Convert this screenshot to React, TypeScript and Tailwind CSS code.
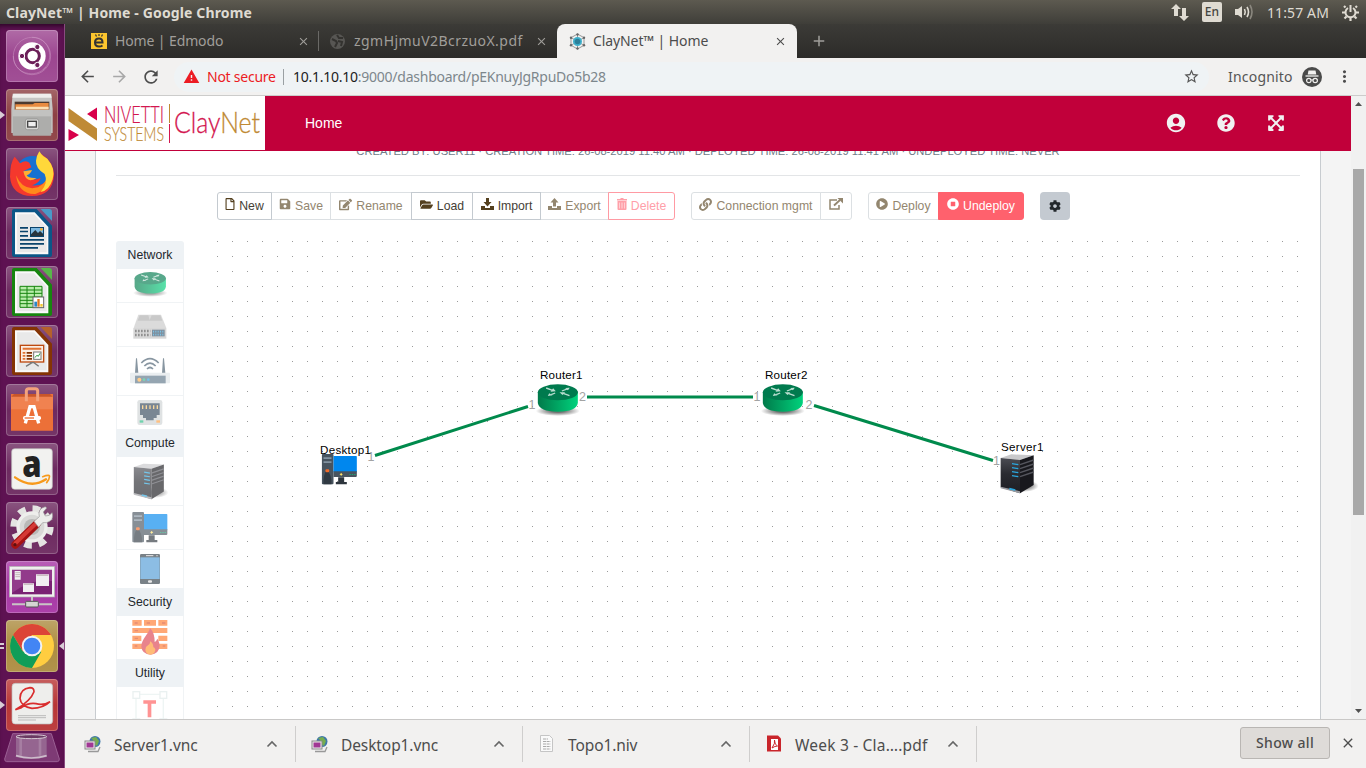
import React from "react";
import {
  FaCog,
  FaEdit,
  FaExpandArrowsAlt,
  FaFolderOpen,
  FaLink,
  FaPlayCircle,
  FaQuestionCircle,
  FaRegFile,
  FaSave,
  FaStopCircle,
} from "react-icons/fa";
import { MdAccountCircle, MdArrowBack, MdArrowForward, MdRefresh, MdStarBorder, MdWarning, MdMoreVert, MdClose, MdAdd } from "react-icons/md";

const UI = "font-['Noto_Sans','Open_Sans',sans-serif]";

/* ---------- Desktop launcher ---------- */

function Doc({ edge, corner, children }: { edge: string; corner: string; children: React.ReactNode }) {
  return (
    <>
      <path d="M20 6H92L138 56V144Q138 150 132 150H24Q18 150 18 144V12Q18 6 24 6Z" fill={edge} />
      <path d="M27 16H86L127 60V142H27Z" fill="#fafafa" />
      <path d="M33 22H84L122 62V136H33Z" fill="#e9e9e9" />
      <path d="M104 6H130Q138 6 138 14V42Z" fill={corner} />
      {children}
    </>
  );
}

const launcher: { tile: string; icon: React.ReactNode; mark?: "left" | "both" }[] = [
  {
    tile: "bg-[#9c4690]",
    icon: (
      <>
        <circle cx="78" cy="78" r="56" fill="none" stroke="#c68bbd" strokeWidth="3" opacity=".6" />
        <path d="M78 22C130 20 150 90 110 120M22 78C20 130 90 150 120 110" fill="none" stroke="#d3a4cc" strokeWidth="2" opacity=".6" />
        <circle cx="78" cy="78" r="41" fill="#fff" />
        <circle cx="80" cy="78" r="20" fill="none" stroke="#6b1f58" strokeWidth="9" />
        <g fill="#6b1f58" stroke="#fff" strokeWidth="3">
          <circle cx="48" cy="78" r="8" />
          <circle cx="94" cy="51" r="8" />
          <circle cx="94" cy="105" r="8" />
        </g>
      </>
    ),
  },
  {
    tile: "bg-[#8d4043]",
    mark: "left",
    icon: (
      <>
        <path d="M20 14H136L140 60V132H16V60Z" fill="#c6c6c4" />
        <path d="M22 14H134L137 26H19Z" fill="#efefed" />
        <rect x="26" y="38" width="104" height="32" fill="#4c3a30" />
        <path d="M28 46H80L86 42H128V68H28Z" fill="#e88b40" />
        <path d="M30 53H128V60H30Z" fill="#fbe0b5" />
        <rect x="20" y="62" width="116" height="78" rx="3" fill="#adadab" />
        <rect x="20" y="62" width="116" height="20" fill="#c2c2c0" />
        <rect x="58" y="90" width="40" height="32" rx="6" fill="#d9d9d7" stroke="#8a8a88" strokeWidth="2" />
        <rect x="65" y="97" width="26" height="17" fill="#eee" stroke="#444" strokeWidth="4" />
      </>
    ),
  },
  {
    tile: "bg-[#6d2a60]",
    icon: (
      <>
        <circle cx="80" cy="76" r="52" fill="#1671d2" />
        <path d="M26 26L42 46Q60 34 70 44L76 58L52 70Q62 96 92 94L104 90Q100 106 78 112Q120 116 132 80Q140 44 100 14Q144 40 144 84Q138 144 78 144Q16 142 12 86Q12 44 26 26Z" fill="#f5382d" />
        <path d="M30 82Q50 130 96 118Q128 104 128 64Q142 120 88 138Q38 140 30 82Z" fill="#ff8a1c" />
        <path d="M100 10Q110 26 124 32Q150 62 140 94Q130 128 104 132Q128 104 116 78Q88 60 90 38Q92 22 100 10Z" fill="#ffd83a" />
        <path d="M52 70L78 66Q74 78 62 82Q68 92 92 90Q60 110 52 70Z" fill="#ffad32" />
      </>
    ),
  },
  {
    tile: "bg-[#6d2a60]",
    icon: (
      <Doc edge="#0b5687" corner="#4a9ac8">
        <g fill="#0a446c">
          <path d="M42 60H66V65H42ZM42 71H66V76H42ZM42 84H66V89H42ZM42 96H114V101H42ZM42 108H114V113H42ZM42 120H96V125H42Z" />
          <rect x="72" y="60" width="42" height="30" />
        </g>
        <rect x="75" y="63" width="36" height="24" fill="#7db9e0" />
        <path d="M75 82L88 69L96 78L102 72L111 80V87H75Z" fill="#28353d" />
        <circle cx="106" cy="67" r="4" fill="#f2ad2e" />
      </Doc>
    ),
  },
  {
    tile: "bg-[#6d2a60]",
    icon: (
      <Doc edge="#17850f" corner="#58b64a">
        <rect x="42" y="60" width="66" height="64" fill="#b8edaa" />
        <path d="M42 61H108V124H42ZM42 72H108M42 82H108M42 93H108M42 103H108M42 113H108M63 61V124M85 61V124" fill="none" stroke="#17850f" strokeWidth="3" />
        <rect x="81" y="93" width="32" height="32" fill="#fff" stroke="#666" strokeWidth="3" />
        <path d="M85 107H93V122H85Z" fill="#2c87c8" />
        <path d="M94 99H101V122H94Z" fill="#e07620" />
        <path d="M103 114H110V122H103Z" fill="#f3c72e" />
      </Doc>
    ),
  },
  {
    tile: "bg-[#6d2a60]",
    icon: (
      <Doc edge="#843404" corner="#b4612b">
        <rect x="43" y="61" width="70" height="50" fill="#fbeee4" stroke="#bd4a10" strokeWidth="4" />
        <path d="M50 68H106V74H50ZM50 81H58V86H50ZM50 90H58V95H50ZM50 99H58V104H50Z" fill="#e07333" />
        <path d="M62 81H78V86H62ZM62 90H78V95H62ZM62 99H78V104H62Z" fill="#843404" />
        <rect x="83" y="81" width="22" height="22" fill="#fff" stroke="#777" strokeWidth="3" />
        <path d="M86 98L93 91L97 94L102 85" fill="none" stroke="#2d9b3c" strokeWidth="3" />
        <path d="M72 113H84L98 124M78 113L60 124" fill="none" stroke="#777" strokeWidth="4" />
      </Doc>
    ),
  },
  {
    tile: "bg-[#6d2a60]",
    icon: (
      <>
        <path d="M15 30H141V140H15Z" fill="#ec7038" />
        <path d="M15 40L24 30H132L141 40Z" fill="#c9562a" />
        <path d="M15 38H141V76H15Z" fill="#f08250" />
        <path d="M61 52V20Q62 14 68 14H88Q94 14 95 20V52" fill="none" stroke="#f3a27c" strokeWidth="9" />
        <path d="M58 118L72 68H84L98 118" fill="none" stroke="#fff" strokeWidth="10" />
        <rect x="51" y="96" width="54" height="12" rx="5" fill="#fff" />
        <path d="M56 100H84V104H56Z" fill="#ec7038" />
      </>
    ),
  },
  {
    tile: "bg-[#6d2a60]",
    icon: (
      <>
        <rect x="17" y="17" width="122" height="122" rx="9" fill="#f2f2f0" stroke="#bbb" strokeWidth="2" />
        <text x="78" y="101" textAnchor="middle" fontFamily="Open Sans" fontWeight="800" fontSize="112" fill="#222" textLength="58" lengthAdjust="spacingAndGlyphs">
          a
        </text>
        <path d="M27 103Q76 138 120 109" fill="none" stroke="#f79a1c" strokeWidth="7" strokeLinecap="round" />
        <path d="M110 101Q134 92 130 103Q130 110 122 119" fill="none" stroke="#f79a1c" strokeWidth="5" strokeLinecap="round" />
      </>
    ),
  },
  {
    tile: "bg-[#6d2a60]",
    icon: (
      <>
        <circle cx="78" cy="75" r="54" fill="none" stroke="#e4e4e2" strokeWidth="22" strokeDasharray="22 20.4" />
        <circle cx="78" cy="75" r="42" fill="#d9d9d7" stroke="#eeeeec" strokeWidth="10" />
        <circle cx="78" cy="75" r="24" fill="#b9b9b7" />
        <path d="M28 128L92 66" stroke="#a51313" strokeWidth="24" strokeLinecap="round" />
        <path d="M28 124L90 64" stroke="#d53a36" strokeWidth="12" strokeLinecap="round" />
        <circle cx="27" cy="128" r="5" fill="#5e1010" />
        <path d="M84 58L100 44Q94 20 118 14L122 18L112 30L118 42L130 40L138 32Q146 54 122 62L110 62L98 76Z" fill="#ededeb" stroke="#999" strokeWidth="2" />
      </>
    ),
  },
  {
    tile: "bg-[#a737a5]",
    icon: (
      <>
        <rect x="10" y="16" width="136" height="92" fill="#f0f0ee" stroke="#aaa" strokeWidth="2" />
        <rect x="18" y="24" width="120" height="76" fill="#7a2273" />
        <path d="M18 24H138V60Q80 50 18 96Z" fill="#923a8b" />
        <path d="M18 25H138" stroke="#ddd" strokeWidth="3" />
        <path d="M26 30H44V56H26ZM90 40H129V75H90ZM51 67H84V93H51Z" fill="#f1eef1" />
        <path d="M28 35H42M28 41H42M28 47H42M92 43H127M53 70H82" stroke="#a99" strokeWidth="2" />
        <path d="M78 108V122M18 130H138" stroke="#c9c5c5" strokeWidth="6" />
        <rect x="59" y="121" width="38" height="17" rx="3" fill="#d4d4d2" stroke="#555" strokeWidth="3" />
      </>
    ),
  },
  {
    tile: "bg-[#ad8d42]",
    mark: "both",
    icon: (
      <>
        <circle cx="78" cy="78" r="66" fill="#ffcd40" />
        <path d="M78 45H135A66 66 0 0 0 21 45L50 94Z" fill="#dc4437" />
        <path d="M21 45A66 66 0 0 0 78 144L106 95L50 94Z" fill="#109d58" />
        <circle cx="78" cy="78" r="31" fill="#f2f2f2" />
        <circle cx="78" cy="78" r="25" fill="#4285f4" />
      </>
    ),
  },
  {
    tile: "bg-[#b83636]",
    mark: "left",
    icon: (
      <>
        <rect x="18" y="13" width="122" height="122" rx="10" fill="#eeeeec" stroke="#bbb" strokeWidth="2" />
        <path d="M28 92Q74 66 84 38Q84 26 72 26Q42 30 42 58Q44 82 78 88Q112 88 132 68Q112 80 90 74Q68 70 46 86Z" fill="none" stroke="#d92d2d" strokeWidth="5" />
        <path d="M36 110H120M36 116H120M36 123H90" stroke="#bbb" strokeWidth="3" />
      </>
    ),
  },
];

function Launcher() {
  return (
    <aside className="flex w-[65px] shrink-0 flex-col gap-[7px] overflow-hidden border-r border-[#8a4a80] bg-[#5e1252] pt-[6px] shadow-[inset_0_5px_5px_-3px_#2a0524]">
      {launcher.map((l, i) => (
        <div key={i} className="flex h-[52px] shrink-0 items-center">
          <span className="flex w-[6px] flex-col justify-center gap-[2px]">
            {l.mark === "left" && (
              <svg width="5" height="8" viewBox="0 0 5 8">
                <path d="M0 0L5 4L0 8Z" fill="#d8cdd6" />
              </svg>
            )}
            {l.mark === "both" && (
              <>
                <i className="h-[2px] w-[4px] bg-[#d8cdd6]" />
                <i className="h-[2px] w-[4px] bg-[#d8cdd6]" />
              </>
            )}
          </span>
          <div className={`h-[52px] w-[52px] rounded-[4px] shadow-[inset_0_0_0_1px_rgba(255,255,255,0.22)] ${l.tile}`}>
            <div className="h-full w-full rounded-[4px] bg-linear-to-b from-white/20 via-transparent to-white/5">
              <svg width="52" height="52" viewBox="0 0 156 156">
                {l.icon}
              </svg>
            </div>
          </div>
          {l.mark === "both" && (
            <svg className="ml-px" width="5" height="8" viewBox="0 0 5 8">
              <path d="M5 0L0 4L5 8Z" fill="#d8cdd6" />
            </svg>
          )}
        </div>
      ))}
      <svg className="-mt-[5px] ml-[4px] shrink-0" width="56" height="30" viewBox="0 0 168 90">
        <path d="M26 2H142L166 78Q166 86 160 86H8Q2 86 2 78Z" fill="#7e3a75" stroke="#9b6094" strokeWidth="3" />
        <path d="M36 12V72Q82 84 128 72V12Z" fill="#a27c9e" opacity=".65" />
        <path d="M50 16V68M108 16V68" stroke="#c7aec4" strokeWidth="8" opacity=".35" />
        <ellipse cx="82" cy="11" rx="46" ry="6" fill="#6a3a63" stroke="#d6cad4" strokeWidth="3" />
        <path d="M36 68Q82 82 128 68" fill="none" stroke="#cdbccb" strokeWidth="5" />
      </svg>
    </aside>
  );
}

/* ---------- Window chrome ---------- */

function TopPanel() {
  return (
    <div className={`flex h-[24px] shrink-0 items-center justify-between bg-linear-to-b from-[#5d5a50] to-[#3f3e39] pl-[6px] pr-[7px] text-[#dfdbd2] ${UI}`}>
      <span className="pt-px text-[14px] font-bold leading-none tracking-[0.13px]">ClayNet™ | Home - Google Chrome</span>
      <div className="flex items-center">
        <svg width="18" height="17" viewBox="0 0 18 17" fill="#dfdbd2">
          <path d="M5 0L10 5H7V12H3V5H0ZM13 17L8 12H11V4H15V12H18Z" />
        </svg>
        <span className="ml-[13px] flex h-[20px] w-[20px] items-center justify-center rounded-[2px] bg-[#dfdbd2] text-[12px] font-medium leading-none text-[#454440]">En</span>
        <svg className="ml-[12px]" width="20" height="16" viewBox="0 0 20 16">
          <path d="M1 5H4L8 2V14L4 11H1Z" fill="#dfdbd2" />
          <path d="M10.500 5Q12 8 10.500 11M13 3Q16 8 13 13" fill="none" stroke="#dfdbd2" strokeWidth="1.600" />
          <path d="M16 1Q20 8 16 15" fill="none" stroke="#8a877e" strokeWidth="1.600" />
        </svg>
        <span className="ml-[13px] pt-px text-[14px] leading-none tracking-[0.13px]">11:57 AM</span>
        <svg className="ml-[13px]" width="17" height="17" viewBox="0 0 17 17" fill="none" stroke="#dfdbd2">
          <path d="M6 4A5 5 0 1 0 11 4" strokeWidth="2" />
          <path d="M8.500 1V8" strokeWidth="2" />
          <path d="M3.500 3.500L2 2M13.500 3.500L15 2M3 8.500H0M17 8.500H14M4.500 12.500L2.500 14.500M12.500 12.500L14.500 14.500M8.500 14V17" strokeWidth="2.200" />
        </svg>
      </div>
    </div>
  );
}

function Tabs() {
  return (
    <div className={`flex h-[34px] shrink-0 bg-linear-to-b from-[#3c3b37] to-[#2c2b29] text-[14px] leading-none text-[#a09e9a] ${UI}`}>
      <div className="flex w-[253px] items-center pl-[26px] pr-[8px]">
        <svg width="16" height="16" viewBox="0 0 16 16">
          <rect width="16" height="16" fill="#fcc52e" />
          <path d="M4 9.500H11.500Q11.500 5.500 8 5.500Q4 5.500 4 9.500Q4 13.500 8 13.500Q10 13.500 11.500 12.500" fill="none" stroke="#333" strokeWidth="2" />
          <path d="M4.500 1.500L5.500 3.500M8 1V3M11.500 1.500L10.500 3.500" stroke="#333" strokeWidth="1.200" />
        </svg>
        <span className="ml-[8px] grow whitespace-nowrap tracking-[-0.12px]">Home | Edmodo</span>
        <MdClose size={13} />
      </div>
      <div className="my-[7px] w-px bg-[#6a6966]" />
      <div className="flex w-[238px] items-center pl-[11px] pr-[9px]">
        <svg width="15" height="15" viewBox="0 0 15 15">
          <circle cx="7.500" cy="7.500" r="7.500" fill="#575653" />
          <path d="M2 5L6 7L7 9L5 13M7 1L9 4L13 4M8 7L12 8L11 12" fill="none" stroke="#33322f" strokeWidth="2" />
        </svg>
        <span className="ml-[9px] grow whitespace-nowrap tracking-[0.45px]">zgmHjmuV2BcrzuoX.pdf</span>
        <MdClose size={13} />
      </div>
      <div className="flex w-[240px] items-center rounded-t-[8px] bg-[#f2f1f0] pl-[12px] pr-[10px] text-[#4c4c4c]">
        <svg width="17" height="17" viewBox="0 0 17 17">
          <path d="M8.500 1L15 4.700V12.300L8.500 16L2 12.300V4.700ZM8.500 1V16M2 4.700L15 12.300M15 4.700L2 12.300" fill="none" stroke="#999" strokeWidth="1" />
          <g fill="#666">
            <circle cx="8.500" cy="1.500" r="1.200" />
            <circle cx="15" cy="4.700" r="1.200" />
            <circle cx="15" cy="12.300" r="1.200" />
            <circle cx="8.500" cy="15.500" r="1.200" />
            <circle cx="2" cy="12.300" r="1.200" />
            <circle cx="2" cy="4.700" r="1.200" />
          </g>
          <circle cx="8.500" cy="8.500" r="4.500" fill="#3eb0cc" />
          <circle cx="8.500" cy="8.500" r="2.800" fill="#2a7f99" />
        </svg>
        <span className="ml-[7px] grow whitespace-nowrap tracking-[-0.1px]">ClayNet™ | Home</span>
        <MdClose size={13} />
      </div>
      <div className="flex items-center pl-[13px]">
        <MdAdd size={18} />
      </div>
    </div>
  );
}

function AddressBar() {
  return (
    <div className={`flex h-[38px] shrink-0 items-center border-b border-[#cccccb] bg-[#f2f1f0] pl-[13px] pr-[12px] text-[14px] leading-none ${UI}`}>
      <MdArrowBack size={19} className="text-[#4d4d4d]" />
      <MdArrowForward size={19} className="ml-[13px] text-[#a8a8a8]" />
      <MdRefresh size={20} className="ml-[12px] text-[#4d4d4d]" />
      <div className="ml-[13px] flex h-[30px] w-[1035px] items-center rounded-full bg-[#eff3f5] pl-[9px] pr-[9px]">
        <MdWarning size={17} className="text-[#ec1c24]" />
        <span className="ml-[7px] w-[69px] whitespace-nowrap tracking-[-0.25px] text-[#ec1c24]">Not secure</span>
        <span className="ml-[7px] h-[16px] w-px bg-[#9aa0a3]" />
        <span className="ml-[9px] grow whitespace-nowrap tracking-[-0.25px] text-[#7d878c]">
          <span className="text-[#1c1c1c]">10.1.10.10</span>:9000/dashboard/pEKnuyJgRpuDo5b28
        </span>
        <MdStarBorder size={17} className="text-[#555]" />
      </div>
      <span className="ml-[19px] whitespace-nowrap tracking-[0.2px] text-[#555]">Incognito</span>
      <svg className="ml-auto" width="20" height="20" viewBox="0 0 20 20">
        <circle cx="10" cy="10" r="10" fill="#4a4a4a" />
        <path d="M6.500 3.500H13.500L14.300 7.500H5.700Z" fill="#f2f1f0" />
        <path d="M3.500 9H16.500" stroke="#f2f1f0" strokeWidth="1.300" />
        <circle cx="6.800" cy="13.500" r="2.200" fill="none" stroke="#f2f1f0" strokeWidth="1.200" />
        <circle cx="13.200" cy="13.500" r="2.200" fill="none" stroke="#f2f1f0" strokeWidth="1.200" />
        <path d="M9 13H11" stroke="#f2f1f0" />
      </svg>
      <MdMoreVert size={19} className="ml-[13px] text-[#4d4d4d]" />
    </div>
  );
}

/* ---------- Page header ---------- */

function Header() {
  return (
    <header className="z-10 flex h-[55px] shrink-0 items-stretch border-b border-[#c1003a] bg-[#c1003a] text-[14px] text-white">
      <svg className="w-[200px] bg-white" height="54" viewBox="0 0 200 54">
        <path d="M3.500 12L32 32.500V45L3.500 25Z" fill="#bf8a35" />
        <path d="M32 11.500V24.500L22 18ZM3.500 33V45L14 39Z" fill="#d8004a" />
        <g fontFamily="Lato" fontWeight="300">
          <text x="39" y="26.500" fontSize="22.500" textLength="60" lengthAdjust="spacingAndGlyphs" fill="#d3164f" stroke="#d3164f" strokeWidth=".2">NIVETTI</text>
          <text x="39" y="45" fontSize="19" textLength="60" lengthAdjust="spacingAndGlyphs" fill="#bf8a35" stroke="#bf8a35" strokeWidth=".2">SYSTEMS</text>
          <text x="109" y="36.500" fontSize="28.500" textLength="86" lengthAdjust="spacingAndGlyphs" fill="#d3164f" stroke="#d3164f" strokeWidth=".3">
            Clay<tspan fill="#bf8a35" stroke="#bf8a35">Net</tspan>
          </text>
        </g>
        <path d="M104.500 8V27" stroke="#bf8a35" />
        <path d="M104.500 28V47" stroke="#d3164f" />
      </svg>
      <nav className="flex grow items-center pl-[40px]">Home</nav>
      <div className="flex items-center gap-[30px] pr-[66px] text-[#f1f1f1]">
        <MdAccountCircle size={22} />
        <FaQuestionCircle size={18} />
        <FaExpandArrowsAlt size={18} className="ml-[2px]" />
      </div>
    </header>
  );
}

/* ---------- Toolbar ---------- */

function Tray({ up }: { up?: boolean }) {
  return (
    <svg width="13" height="12" viewBox="0 0 13 12" fill="currentColor">
      {up ? <path d="M6.500 0L10.500 4.500H8V8.500H5V4.500H2.500Z" /> : <path d="M5 0H8V4H10.500L6.500 8.500L2.500 4H5Z" />}
      <path d="M0 8H4V10H9V8H13V12H0Z" />
    </svg>
  );
}

function TrashCan() {
  return (
    <svg width="10" height="12" viewBox="0 0 10 12" fill="currentColor">
      <path d="M0 1H3.500V0H6.500V1H10V2.500H0Z" />
      <path fillRule="evenodd" d="M.5 3H9.500V11Q9.500 12 8.500 12H1.500Q.5 12 .5 11ZM2.500 4.500V10.500H3V4.500ZM4.700 4.500V10.500H5.300V4.500ZM7 4.500V10.500H7.500V4.500Z" />
    </svg>
  );
}

function ExternalBox() {
  return (
    <svg width="14" height="12" viewBox="0 0 14 12" fill="none" stroke="currentColor">
      <path d="M8 2H1V11H10V7" strokeWidth="1.500" />
      <path d="M5 7.500L11 2" strokeWidth="1.800" />
      <path d="M8.500 0H14V5.500Z" fill="currentColor" stroke="none" />
    </svg>
  );
}

function Button({ w, icon, label, tone = "on", first, last }: { w: string; icon: React.ReactNode; label?: string; tone?: "on" | "off" | "danger" | "solid"; first?: boolean; last?: boolean }) {
  const tones = {
    on: "border-[#c4cad0] text-[#54401f] z-[1] [&>span]:text-[#454036]",
    off: "border-[#dce0e3] text-[#93866f]",
    danger: "border-[#ff9aa3] text-[#ffa0a9] z-[1]",
    solid: "border-[#ff616d] bg-[#ff616d] text-white z-[1]",
  };
  return (
    <button
      className={`relative flex h-[28px] items-start justify-center gap-[4px] border pt-[5px] text-[12.25px] leading-[17px] whitespace-nowrap ${w} ${tones[tone]} ${first ? "rounded-l-[3px]" : "-ml-px"} ${last ? "rounded-r-[3px]" : ""}`}
    >
      <i className="flex">{icon}</i>
      {label && <span>{label}</span>}
    </button>
  );
}

function Toolbar() {
  return (
    <div className="flex h-[28px] pl-[101px]">
      <div className="flex">
        <Button first w="w-[55px]" icon={<FaRegFile size={12} className="w-[10px]" />} label="New" />
        <Button w="w-[60px]" tone="off" icon={<FaSave size={12} />} label="Save" />
        <Button w="w-[82px]" tone="off" icon={<FaEdit size={13} />} label="Rename" />
        <Button w="w-[62px]" icon={<FaFolderOpen size={13} />} label="Load" />
        <Button w="w-[69px]" icon={<Tray />} label="Import" />
        <Button w="w-[69px]" tone="off" icon={<Tray up />} label="Export" />
        <Button last w="w-[67px]" tone="danger" icon={<TrashCan />} label="Delete" />
      </div>
      <div className="ml-[16px] flex">
        <Button first w="w-[130px]" tone="off" icon={<FaLink size={13} />} label="Connection mgmt" />
        <Button last w="w-[32px]" tone="off" icon={<ExternalBox />} />
      </div>
      <div className="ml-[16px] flex">
        <Button first w="w-[71px]" tone="off" icon={<FaPlayCircle size={12} />} label="Deploy" />
        <Button last w="w-[86px]" tone="solid" icon={<FaStopCircle size={12} />} label="Undeploy" />
      </div>
      <button className="ml-[16px] flex w-[30px] items-center justify-center rounded-[4px] bg-[#c4cad1] text-[#23282c]">
        <FaCog size={12} />
      </button>
    </div>
  );
}

/* ---------- Device drawings ---------- */

function Router() {
  return (
    <g>
      <ellipse cx="62" cy="82" rx="66" ry="15" fill="url(#shadow)" />
      <path d="M2 26V58Q6 84 62 84Q118 84 122 58V26Z" fill="url(#routerSide)" />
      <ellipse cx="62" cy="26" rx="60" ry="24" fill="#007a4e" />
      <path d="M27 13L46 20M95 14L74 22M54 28L42 33M97 36L78 29" stroke="#b9ddd0" strokeWidth="4" />
      <path d="M56 23L40 24L48 14ZM98 12L92 20L84 13ZM32 37L36 29L46 35ZM67 26L84 26L76 34Z" fill="#b9ddd0" />
    </g>
  );
}

function Desktop() {
  return (
    <g>
      <rect x="1" y="0" width="35" height="91" rx="3" fill="#48545f" />
      <path d="M6 10H30V15H6ZM6 22H30V27H6Z" fill="#8292a0" />
      <path d="M6 91Q4 64 16 48Q32 64 30 91Z" fill="#303942" />
      <rect x="12" y="46" width="11" height="9" rx="3" fill="#f26b2a" />
      <path d="M36 6H104Q106 6 106 8V55H36Z" fill="#0087ee" />
      <path d="M36 52H106V66Q106 69 103 69H36Z" fill="#48545f" />
      <path d="M50 70H68V84H76V91H43V84H50Z" fill="#2d353d" />
      <path d="M59 56L61 59L64 61L61 63L59 66L57 63L54 61L57 59Z" fill="#ffe36a" />
      <path d="M84 60H88V63H84ZM91 60H95V63H91ZM98 60H102V63H98Z" fill="#18a978" />
    </g>
  );
}

function Server() {
  return (
    <g>
      <ellipse cx="72" cy="96" rx="44" ry="18" fill="url(#shadow)" />
      <path d="M2 12L34 1L101 4L60 18Z" fill="#c9c9cb" />
      <path d="M2 12L60 18V118L2 100Z" fill="url(#serverFront)" />
      <path d="M60 18L101 4V93L60 118Z" fill="#18181d" />
      <path d="M60 32L101 18M60 44L101 30M60 56L101 42M60 68L101 54" stroke="#55565e" strokeWidth="4" />
      <path d="M36 29L55 32M36 41L55 44M36 53L55 56M36 65L55 68" stroke="#2aa8e0" strokeWidth="4" />
      <path d="M2 98L60 112V118L2 103Z" fill="#9a9ba0" />
      <path d="M28 104L46 108" stroke="#2aa8e0" strokeWidth="5" />
    </g>
  );
}

function Defs() {
  return (
    <defs>
      <linearGradient id="routerSide">
        <stop offset="0" stopColor="#007a4a" />
        <stop offset="1" stopColor="#00d27c" />
      </linearGradient>
      <linearGradient id="serverFront" x2="0" y2="1">
        <stop offset="0" stopColor="#4b4c53" />
        <stop offset="0.45" stopColor="#2a2b31" />
        <stop offset="1" stopColor="#1d1e24" />
      </linearGradient>
      <radialGradient id="shadow">
        <stop offset="0.3" stopColor="#000" stopOpacity=".55" />
        <stop offset="1" stopColor="#000" stopOpacity="0" />
      </radialGradient>
      <pattern id="dots" width="15" height="15" patternUnits="userSpaceOnUse">
        <rect width="1" height="1" fill="#9b9b9b" />
      </pattern>
    </defs>
  );
}

/* ---------- Palette ---------- */

function Heading({ children }: { children: React.ReactNode }) {
  return <div className="flex h-[28px] shrink-0 items-center justify-center bg-[#eef2f5] text-[12.25px] text-[#23282c] first:rounded-t-[3px]">{children}</div>;
}

function Item({ h, children, line = true }: { h: string; children: React.ReactNode; line?: boolean }) {
  return (
    <div className={`flex shrink-0 justify-center border-x border-[#f0f3f5] ${line ? "border-b" : ""} ${h}`}>
      <div className="opacity-65">{children}</div>
    </div>
  );
}

function Palette() {
  return (
    <div className="flex w-[68px] shrink-0 flex-col">
      <Heading>Network</Heading>
      <Item h="h-[34px]">
        <svg className="mt-[2px]" width="36" height="28" viewBox="-8 -2 138 107">
          <Router />
        </svg>
      </Item>
      <Item h="h-[44px]">
        <svg className="mt-[11px]" width="34" height="26" viewBox="0 0 102 78">
          <path d="M16 2H84L100 42H2Z" fill="#c9c9c9" />
          <path d="M20 4H46L50 18L56 4H82L88 20H14Z" fill="#adadad" />
          <rect x="1" y="42" width="99" height="32" fill="#c3c3c3" />
          <path d="M6 51H52M6 63H52" stroke="#555" strokeWidth="7" strokeDasharray="5 4" />
          <rect x="57" y="47" width="38" height="20" fill="#3d566b" />
          <path d="M60 53H93M60 62H93" stroke="#36a3d9" strokeWidth="5" strokeDasharray="3 4" />
        </svg>
      </Item>
      <Item h="h-[49px]">
        <svg className="mt-[10px]" width="40" height="28" viewBox="0 0 120 84">
          <path d="M15 48L18 4H21L25 48ZM96 48L99 4H102L106 48Z" fill="#4a5f70" />
          <path d="M34 18Q60 -8 86 18M43 27Q60 10 77 27M51 36Q60 27 69 36" fill="none" stroke="#4a5f70" strokeWidth="5" />
          <rect x="0" y="47" width="120" height="32" rx="3" fill="#e0e5e9" />
          <rect x="15" y="56" width="92" height="23" fill="#5e7688" />
          <circle cx="28" cy="68" r="6" fill="#ffb24d" />
          <circle cx="42" cy="68" r="4" fill="#35bf8a" />
          <circle cx="55" cy="68" r="4" fill="#2da5dd" />
        </svg>
      </Item>
      <Item h="h-[33px]" line={false}>
        <svg className="mt-[4px]" width="26" height="26" viewBox="0 0 78 78">
          <rect x="1" y="0" width="75" height="75" rx="7" fill="#cfd4d5" />
          <path d="M9 10H68V45H59V54H50V61H27V54H18V45H9Z" fill="#33475a" />
          <path d="M15 16H19V27H15ZM26 16H30V27H26ZM37 16H41V27H37ZM48 16H52V27H48ZM59 16H63V27H59Z" fill="#f7c46a" />
          <rect x="8" y="61" width="11" height="7" fill="#25bd82" />
          <rect x="58" y="61" width="11" height="7" fill="#ff9e3d" />
        </svg>
      </Item>
      <Heading>Compute</Heading>
      <Item h="h-[49px]">
        <svg className="mt-[6px]" width="37" height="39" viewBox="-4 0 122 126">
          <Server />
        </svg>
      </Item>
      <Item h="h-[44px]">
        <svg className="mt-[6px]" width="36" height="32" viewBox="0 0 108 96">
          <Desktop />
        </svg>
      </Item>
      <Item h="h-[38px]" line={false}>
        <svg className="mt-[4px]" width="20" height="30" viewBox="0 0 60 90">
          <rect width="60" height="90" rx="4" fill="#333e48" />
          <rect x="1" y="10" width="58" height="65" fill="#4f9bd6" />
          <path d="M18 5H40" stroke="#ddd" strokeWidth="3" />
          <circle cx="51" cy="5" r="2" fill="#ddd" />
          <rect x="24" y="79" width="12" height="7" rx="3" fill="#ddd" />
        </svg>
      </Item>
      <Heading>Security</Heading>
      <Item h="h-[43px]" line={false}>
        <svg className="mt-[4px]" width="36" height="36" viewBox="0 0 108 108">
          <path d="M1 0H29V17H1ZM36 0H72V17H36ZM79 0H106V17H79ZM1 24H106V39H1ZM1 47H28V63H1ZM79 47H106V63H79ZM1 71H106V87H1Z" fill="#ff7a2e" />
          <path d="M8 9H17M44 9H54M90 9H100M8 32H18M8 55H18M92 78H100M8 78H16" stroke="#d94f2a" strokeWidth="4" />
          <path d="M54 24C50 42 28 58 28 80Q30 102 56 104Q82 102 83 76Q80 60 76 56Q73 64 68 66Q68 38 54 24Z" fill="#dd4250" />
          <path d="M55 64Q54 74 48 76Q40 80 40 90Q42 104 56 104Q70 102 70 88Q66 80 64 82Q64 70 55 64Z" fill="#ff9830" />
        </svg>
      </Item>
      <Heading>Utility</Heading>
      <Item h="h-[44px]">
        <svg className="mt-[4px]" width="36" height="36" viewBox="0 0 108 108">
          <path d="M12 10H94V92H12Z" fill="none" stroke="#e6f0ef" strokeWidth="4" />
          <g fill="#fff" stroke="#e0ebea" strokeWidth="4">
            <rect x="3" y="2" width="20" height="20" />
            <rect x="84" y="2" width="20" height="20" />
            <rect x="3" y="84" width="20" height="20" />
            <rect x="84" y="84" width="20" height="20" />
          </g>
          <path d="M34 28H72V38H58V79H47V38H34Z" fill="#ff5a5a" />
        </svg>
      </Item>
    </div>
  );
}

/* ---------- Topology canvas: origin at its own top-left corner ---------- */

function Topology() {
  return (
    <svg className="ml-[33px] shrink-0" width="1083" height="478" viewBox="0 0 1083 478" fontFamily="Liberation Sans">
      <Defs />
      <rect width="1083" height="478" fill="url(#dots)" />
      <g stroke="#008a4c" strokeWidth="3">
        <path d="M158 214.500L311 165.500M370 156H536M597 164.500L776 219.500" />
      </g>
      <svg x="317.500" y="142" width="46" height="36" viewBox="-8 -2 138 108">
        <Router />
      </svg>
      <svg x="542.500" y="142" width="46" height="36" viewBox="-8 -2 138 108">
        <Router />
      </svg>
      <svg x="104.500" y="213" width="36" height="32" viewBox="0 0 108 96">
        <Desktop />
      </svg>
      <svg x="783" y="213" width="42" height="42" viewBox="0 0 126 126">
        <Server />
      </svg>
      <g fontSize="12.500" fill="#a3a3a3">
        <text x="311.500" y="168">1</text>
        <text x="362" y="160">2</text>
        <text x="536.500" y="160">1</text>
        <text x="588.500" y="168">2</text>
        <text x="150.500" y="220">1</text>
        <text x="776" y="224">1</text>
      </g>
      <g fontSize="11.600" fill="#000">
        <text x="323" y="138" textLength="42.500">Router1</text>
        <text x="548" y="138" textLength="42.500">Router2</text>
        <text x="103" y="213" textLength="51">Desktop1</text>
        <text x="784" y="210" textLength="42.500">Server1</text>
      </g>
    </svg>
  );
}

/* ---------- Downloads ---------- */

function FileIcon({ kind }: { kind: string }) {
  if (kind === "vnc")
    return (
      <svg width="18" height="18" viewBox="0 0 18 18">
        <circle cx="11" cy="6.500" r="5.500" fill="#3f78a8" />
        <path d="M7 3Q10 5 9 8L13 11L15 6L12 2Z" fill="#77ae4e" />
        <rect x="1" y="6" width="10" height="8" fill="#eee" stroke="#888" />
        <rect x="2.500" y="7.500" width="7" height="5" fill="#a13894" />
        <path d="M4 16.500H14L16 12" fill="none" stroke="#999" strokeWidth="1.300" />
      </svg>
    );
  if (kind === "niv")
    return (
      <svg width="18" height="18" viewBox="0 0 18 18">
        <path d="M2.500 .5H11.500L14.500 3.500V16.500H2.500Z" fill="#fafafa" stroke="#c5c5c5" />
        <path d="M5 4H10M5 6.500H12.500M5 9H12.500M5 11.500H12.500M5 14H12.500" stroke="#aaa" strokeDasharray="3 .6" />
      </svg>
    );
  return (
    <svg width="18" height="18" viewBox="0 0 18 18">
      <path d="M2 .5H13L16 3.500V16.500H2Z" fill="#c9252b" />
      <path d="M6 4H13V15H6Z" fill="#fff" />
      <path d="M7 13Q10.500 8 9.500 5Q9.500 10 12.500 11Q10 11 7 13Z" fill="none" stroke="#c9252b" />
    </svg>
  );
}

const downloads = [
  { kind: "vnc", name: "Server1.vnc", track: "tracking-[-0.1px]" },
  { kind: "vnc", name: "Desktop1.vnc", track: "tracking-[-0.1px]" },
  { kind: "niv", name: "Topo1.niv", track: "tracking-[-0.1px]" },
  { kind: "pdf", name: "Week 3 - Cla….pdf", track: "tracking-[0.2px]" },
];

function Downloads() {
  return (
    <div className={`flex h-[49px] shrink-0 items-center border-t border-[#c9c8c7] bg-[#f2f1f0] pl-[4px] pr-[10px] text-[15.5px] leading-none text-[#4d4d4d] ${UI}`}>
      {downloads.map((d) => (
        <div key={d.name} className="flex h-[36px] w-[227px] items-center border-r border-[#cfcecd] pl-[15px] pr-[17px]">
          <FileIcon kind={d.kind} />
          <span className={`ml-[12px] grow whitespace-nowrap pt-[3px] ${d.track}`}>{d.name}</span>
          <svg width="12" height="8" viewBox="0 0 12 8">
            <path d="M1.500 6.500L6 2L10.500 6.500" fill="none" stroke="#666" strokeWidth="1.600" />
          </svg>
        </div>
      ))}
      <button className="mb-[2px] ml-auto flex h-[32px] w-[90px] items-center justify-center rounded-[3px] border border-[#b9b6b3] bg-[#dedbd8] text-[14px] font-medium tracking-[0.35px]">Show all</button>
      <MdClose size={16} className="mb-[2px] ml-[10px]" />
    </div>
  );
}

function Scrollbar() {
  return (
    <div className="flex w-[15px] shrink-0 flex-col items-center bg-[#f1f1f1] py-[6px]">
      <svg width="7" height="4" viewBox="0 0 7 4">
        <path d="M0 4L3.500 0L7 4Z" fill="#505050" />
      </svg>
      <div className="mt-[63px] h-[346px] w-[11px] shrink-0 bg-[#a8a8a8]" />
      <svg className="mt-auto" width="7" height="4" viewBox="0 0 7 4">
        <path d="M0 0L3.500 4L7 0Z" fill="#505050" />
      </svg>
    </div>
  );
}

export default function App() {
  return (
    <div className="flex h-[768px] w-[1366px] flex-col overflow-hidden bg-white font-['Liberation_Sans',Arial,sans-serif]">
      <TopPanel />
      <div className="flex min-h-0 grow">
        <Launcher />
        <div className="flex min-w-0 grow flex-col">
          <Tabs />
          <AddressBar />
          <div className="flex min-h-0 grow">
            <div className="flex min-w-0 grow flex-col overflow-hidden">
              <Header />
              <div className="flex min-h-0 grow overflow-hidden bg-[#f4f4f4] pl-[30px] pr-[30px]">
                <main className="flex w-[1226px] flex-col border-x border-[#c8ccd0] bg-white px-[20px]">
                  <div className="-mt-[8px] flex h-[33px] shrink-0 justify-center border-b border-[#e3e5e7] text-[11.2px] leading-[17px] whitespace-nowrap text-[#6f7d89]">
                    CREATED BY: USER11 · CREATION TIME: 26-08-2019 11:40 AM · DEPLOYED TIME: 26-08-2019 11:41 AM · UNDEPLOYED TIME: NEVER
                  </div>
                  <div className="mt-[16px] shrink-0">
                    <Toolbar />
                  </div>
                  <div className="mt-[21px] flex min-h-0 grow items-start overflow-hidden">
                    <Palette />
                    <Topology />
                  </div>
                </main>
              </div>
            </div>
            <Scrollbar />
          </div>
          <Downloads />
        </div>
      </div>
    </div>
  );
}
